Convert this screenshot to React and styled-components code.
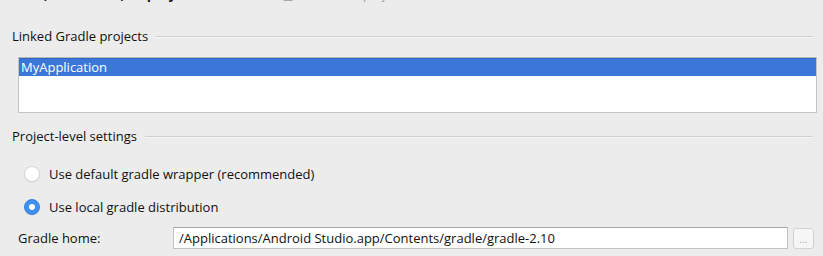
import React from "react";
import styled, { createGlobalStyle } from "styled-components";

const Global = createGlobalStyle`
  html, body { margin: 0; padding: 0; background: #ececec; }
  body { font-family: "Open Sans", "DejaVu Sans", sans-serif; font-size: 13px; color: #111; overflow: hidden; }
  #root { width: 823px; height: 256px; overflow: hidden; }
`;

const Page = styled.div`
  width: 823px;
  height: 256px;
  overflow: hidden;
  display: flex;
  flex-direction: column;
`;

const Header = styled.div`
  display: flex;
  align-items: baseline;
  gap: 10px;
  margin-top: -16px;
  padding-left: 8px;
  height: 18px;
`;

const Title = styled.span`
  font-weight: 700;
  font-size: 14px;
  color: #222;
`;

const Scope = styled.span`
  color: #9a9a9a;
  font-size: 12px;
`;

const Section = styled.div`
  display: flex;
  align-items: center;
  gap: 8px;
  padding: 0 10px 0 12px;
  margin-top: ${(p) => p.$top}px;
  height: 16px;
`;

const SectionTitle = styled.span`
  white-space: nowrap;
`;

const Rule = styled.div`
  flex: 1;
  height: 1px;
  background: #cfcfcf;
  box-shadow: 0 1px 0 #f6f6f6;
`;

const ListBox = styled.div`
  margin: 13px 6px 0 18px;
  height: 54px;
  background: #fff;
  border: 1px solid #c4c4c4;
  border-top-color: #b8b8b8;
`;

const ListRow = styled.div`
  height: 17px;
  line-height: 17px;
  padding-left: 2px;
  background: ${(p) => (p.$selected ? "#3a77d8" : "transparent")};
  color: ${(p) => (p.$selected ? "#fff" : "#1a1a1a")};
  border-top: 1px solid ${(p) => (p.$selected ? "#2f66c4" : "transparent")};
`;

const Options = styled.div`
  display: flex;
  flex-direction: column;
  gap: 17px;
  padding-left: 24px;
  margin-top: 22px;
`;

const Option = styled.label`
  display: flex;
  align-items: center;
  gap: 9px;
  height: 16px;
`;

const Radio = styled.span`
  width: 16px;
  height: 16px;
  border-radius: 50%;
  box-sizing: border-box;
  display: flex;
  align-items: center;
  justify-content: center;
  background: ${(p) => (p.$checked ? "#3d8ff0" : "#fff")};
  border: 1px solid ${(p) => (p.$checked ? "#3a86e6" : "#d6d6d6")};
  box-shadow: 0 0.5px 1px rgba(0, 0, 0, 0.08);
  &::after {
    content: "";
    display: ${(p) => (p.$checked ? "block" : "none")};
    width: 6px;
    height: 6px;
    border-radius: 50%;
    background: #fff;
  }
`;

const HomeRow = styled.div`
  display: flex;
  align-items: center;
  margin-top: 12px;
  padding-left: 18px;
  height: 22px;
`;

const HomeLabel = styled.span`
  width: 155px;
`;

const PathInput = styled.div`
  width: 615px;
  height: 22px;
  box-sizing: border-box;
  background: #fff;
  border: 1px solid #c2c2c2;
  border-top-color: #aaa;
  padding-left: 5px;
  line-height: 20px;
  white-space: nowrap;
  overflow: hidden;
`;

const Browse = styled.div`
  margin-left: 5px;
  width: 21px;
  height: 21px;
  box-sizing: border-box;
  border: 1px solid #d2d2d2;
  border-radius: 3px;
  background: #f6f6f6;
  color: #b0b0b0;
  font-size: 10px;
  display: flex;
  align-items: flex-end;
  justify-content: center;
  padding-bottom: 4px;
  line-height: 1;
`;

export default function App() {
  return (
    <Page>
      <Global />
      <Header>
        <Title>Build, Execution, Deployment › Gradle</Title>
        <Scope>▣ For current project</Scope>
      </Header>
      <Section $top={26}>
        <SectionTitle>Linked Gradle projects</SectionTitle>
        <Rule />
      </Section>
      <ListBox>
        <ListRow $selected>MyApplication</ListRow>
      </ListBox>
      <Section $top={15}>
        <SectionTitle>Project-level settings</SectionTitle>
        <Rule />
      </Section>
      <Options>
        <Option>
          <Radio />
          <span>Use default gradle wrapper (recommended)</span>
        </Option>
        <Option>
          <Radio $checked />
          <span>Use local gradle distribution</span>
        </Option>
      </Options>
      <HomeRow>
        <HomeLabel>Gradle home:</HomeLabel>
        <PathInput>/Applications/Android Studio.app/Contents/gradle/gradle-2.10</PathInput>
        <Browse>...</Browse>
      </HomeRow>
    </Page>
  );
}
